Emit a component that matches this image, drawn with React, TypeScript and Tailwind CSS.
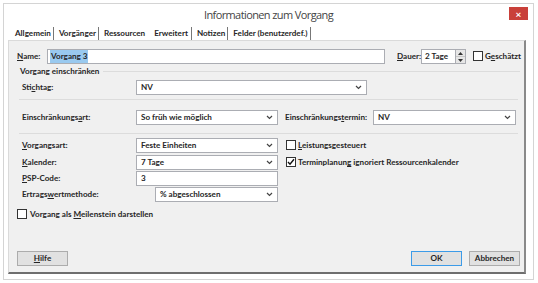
import { ReactNode } from 'react';

const font = { fontFamily: 'Lato, "Noto Sans", sans-serif' };

function Chevron() {
  return (
    <svg width="7" height="5" viewBox="0 0 7 5" className="shrink-0">
      <path d="M1 1 L3.5 3.5 L6 1" stroke="#444" strokeWidth="1.2" fill="none" />
    </svg>
  );
}

function Select({ value, className }: { value: string; className: string }) {
  return (
    <div className={`flex h-[15px] shrink-0 items-center justify-between border border-[#abadb3] bg-white pl-[4px] pr-[4px] ${className}`}>
      <span>{value}</span>
      <Chevron />
    </div>
  );
}

function Box({ checked = false }: { checked?: boolean }) {
  return (
    <div className="flex h-[10px] w-[10px] shrink-0 items-center justify-center border border-[#333] bg-white">
      {checked && (
        <svg width="8" height="8" viewBox="0 0 8 8">
          <path d="M1 4 L3 6.2 L7 1.2" stroke="#111" strokeWidth="1.4" fill="none" />
        </svg>
      )}
    </div>
  );
}

function Label({ children, className = '' }: { children: ReactNode; className?: string }) {
  return <span className={`shrink-0 whitespace-nowrap text-[#262626] ${className}`}>{children}</span>;
}

const tabs = ['Allgemein', 'Vorgänger', 'Ressourcen', 'Erweitert', 'Notizen', 'Felder (benutzerdef.)'];

export default function App() {
  return (
    <div className="h-[283px] w-[538px] bg-white pl-[3px] pt-[3px]" style={font}>
      <div className="flex h-[277px] w-[531px] flex-col border border-[#d4d4d4] bg-white">
        {/* Title bar */}
        <div className="relative flex h-[23px] shrink-0 items-center justify-center">
          <span className="text-[11px] tracking-[-0.6px] text-[#444]" style={{ fontFamily: '"Open Sans", sans-serif' }}>
            Informationen zum Vorgang
          </span>
          <div className="absolute right-[5px] top-[3px] flex h-[13px] w-[19px] items-center justify-center bg-[#c9403a] text-[10px] leading-none font-bold text-white">
            ×
          </div>
        </div>

        {/* Tabs */}
        <div className="flex h-[13px] shrink-0 items-end pl-[6px] text-[8.1px] font-bold text-[#262626]">
          {tabs.map((t) => (
            <div
              key={t}
              className={
                t === 'Erweitert'
                  ? 'flex h-[13px] items-center border-r border-[#777] pl-[7px] pr-[3px] pb-[1px]'
                  : t === 'Ressourcen'
                    ? 'flex h-[13px] items-center pl-[5px] pr-[2px] pb-[1px]'
                    : 'flex h-[13px] items-center border-r border-[#777] pl-[5px] pr-[2px] pb-[1px]'
              }
            >
              {t}
            </div>
          ))}
        </div>

        {/* Panel */}
        <div className="ml-[4px] flex w-[518px] flex-1 flex-col border-t border-l border-[#dadada] border-r-2 border-r-[#8a8a8a] border-b-2 border-b-[#6e6e6e] bg-[#f0f0f0] pl-[8px] pr-[4px] pt-[8px] text-[8.1px] font-bold text-[#262626]">
          {/* Name row */}
          <div className="flex h-[15px] items-center">
            <Label className="w-[30px]">
              <span className="underline">N</span>ame:
            </Label>
            <div className="flex h-[15px] w-[338px] shrink-0 items-center border border-[#abadb3] bg-white pl-[2px]">
              <span className="bg-[#99c9ef] px-[1px]">Vorgang 3</span>
            </div>
            <Label className="ml-[12px] w-[24px]">
              <span className="underline">D</span>auer:
            </Label>
            <div className="flex h-[15px] w-[45px] shrink-0 items-center border border-[#abadb3] bg-white pl-[3px]">
              <span className="flex-1">2 Tage</span>
              <div className="flex h-full w-[10px] flex-col border-l border-[#abadb3] bg-[#e6e6e6]">
                <div className="flex flex-1 items-center justify-center border-b border-[#c8c8c8]">
                  <svg width="5" height="3" viewBox="0 0 5 3"><path d="M0 3 L2.5 0 L5 3 Z" fill="#333" /></svg>
                </div>
                <div className="flex flex-1 items-center justify-center">
                  <svg width="5" height="3" viewBox="0 0 5 3"><path d="M0 0 L2.5 3 L5 0 Z" fill="#333" /></svg>
                </div>
              </div>
            </div>
            <div className="ml-[7px] flex items-center gap-[2px]">
              <Box />
              <Label>
                G<span className="underline">e</span>schätzt
              </Label>
            </div>
          </div>

          {/* Group */}
          <div className="mt-[1px] flex h-[13px] items-center pl-[3px]">
            <Label>Vorgang einschränken</Label>
            <div className="ml-[4px] h-px flex-1 bg-[#dcdcdc]" />
          </div>

          <div className="mt-[2px] flex h-[15px] items-center pl-[5px]">
            <Label className="w-[114px]">
              Sti<span className="underline">c</span>htag:
            </Label>
            <Select value="NV" className="w-[231px]" />
          </div>

          <div className="mx-[2px] mt-[4px] h-px bg-[#dcdcdc]" />

          <div className="mt-[10px] flex h-[15px] items-center pl-[5px]">
            <Label className="w-[114px]">
              Einschränkungs<span className="underline">a</span>rt:
            </Label>
            <Select value="So früh wie möglich" className="w-[142px]" />
            <Label className="ml-[7px] w-[88px]">
              Einschränkungs<span className="underline">t</span>ermin:
            </Label>
            <Select value="NV" className="w-[143px]" />
          </div>

          <div className="mx-[2px] mt-[8px] h-px bg-[#dcdcdc]" />

          <div className="mt-[4px] flex h-[15px] items-center pl-[5px]">
            <Label className="w-[114px]">
              <span className="underline">V</span>organgsart:
            </Label>
            <Select value="Feste Einheiten" className="w-[142px]" />
            <div className="ml-[8px] flex items-center gap-[2px]">
              <Box />
              <Label>
                <span className="underline">L</span>eistungsgesteuert
              </Label>
            </div>
          </div>

          <div className="mt-[2px] flex h-[15px] items-center pl-[5px]">
            <Label className="w-[114px]">
              <span className="underline">K</span>alender:
            </Label>
            <Select value="7 Tage" className="w-[142px]" />
            <div className="ml-[8px] flex items-center gap-[2px]">
              <Box checked />
              <Label>
                Terminplanun<span className="underline">g</span> ignoriert Ressourcenkalender
              </Label>
            </div>
          </div>

          <div className="mt-[1px] flex h-[15px] items-center pl-[5px]">
            <Label className="w-[114px]">
              <span className="underline">P</span>SP-Code:
            </Label>
            <div className="flex h-[15px] w-[142px] shrink-0 items-center border border-[#abadb3] bg-white pl-[4px]">3</div>
          </div>

          <div className="mt-[1px] flex h-[15px] items-center pl-[5px]">
            <Label className="w-[133px]">
              Ertrags<span className="underline">w</span>ertmethode:
            </Label>
            <Select value="% abgeschlossen" className="w-[123px]" />
          </div>

          <div className="mt-[6px] flex h-[12px] items-center gap-[3px]">
            <Box />
            <Label>
              Vorgang als <span className="underline">M</span>eilenstein darstellen
            </Label>
          </div>

          {/* Buttons */}
          <div className="mt-auto mb-[6px] flex items-center">
            <div className="flex h-[15px] w-[51px] items-center justify-center border border-[#acacac] bg-[#e1e1e1]">
              <span className="underline">H</span>ilfe
            </div>
            <div className="ml-auto flex h-[15px] w-[51px] items-center justify-center border border-[#3c9be8] bg-[#e1e1e1]">
              OK
            </div>
            <div className="ml-[7px] flex h-[15px] w-[51px] items-center justify-center border border-[#acacac] bg-[#e1e1e1]">
              Abbrechen
            </div>
          </div>
        </div>
        <div className="h-[5px] shrink-0" />
      </div>
    </div>
  );
}
